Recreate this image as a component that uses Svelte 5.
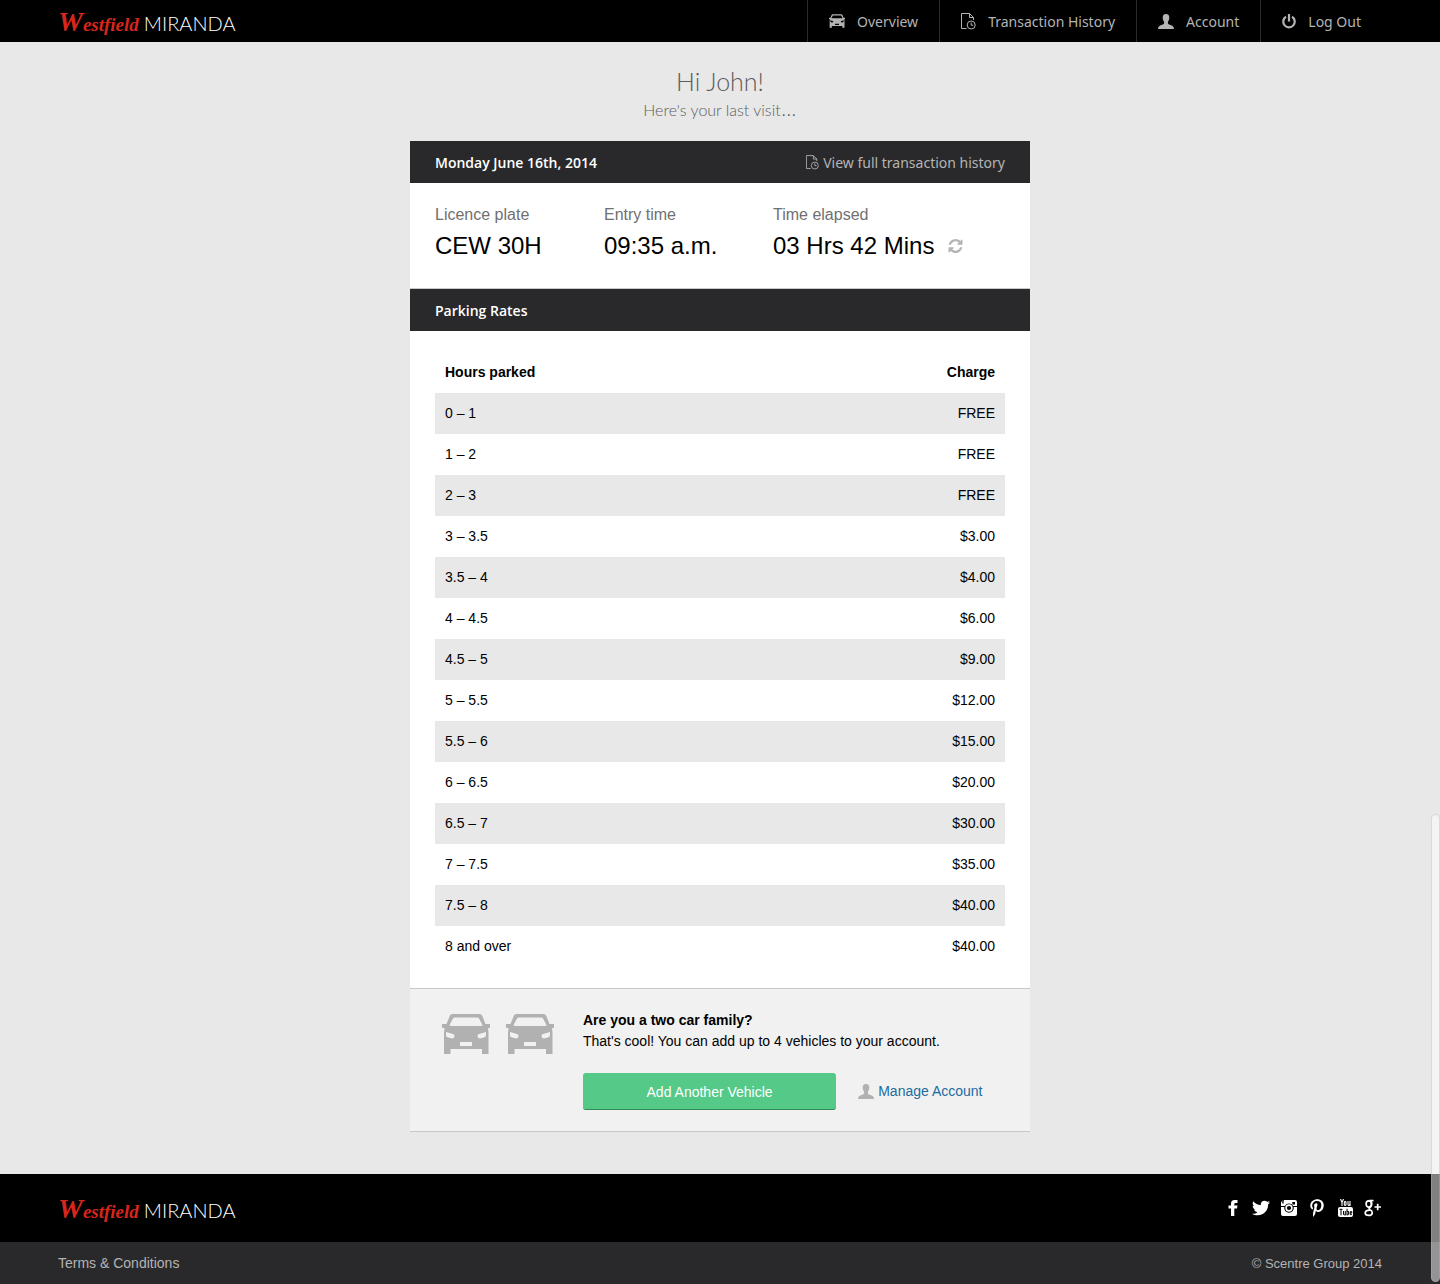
<script>
  const rates = [
    ['0 – 1', 'FREE'],
    ['1 – 2', 'FREE'],
    ['2 – 3', 'FREE'],
    ['3 – 3.5', '$3.00'],
    ['3.5 – 4', '$4.00'],
    ['4 – 4.5', '$6.00'],
    ['4.5 – 5', '$9.00'],
    ['5 – 5.5', '$12.00'],
    ['5.5 – 6', '$15.00'],
    ['6 – 6.5', '$20.00'],
    ['6.5 – 7', '$30.00'],
    ['7 – 7.5', '$35.00'],
    ['7.5 – 8', '$40.00'],
    ['8 and over', '$40.00']
  ];
  const visit = [
    ['Licence plate', 'CEW 30H'],
    ['Entry time', '09:35 a.m.'],
    ['Time elapsed', '03 Hrs 42 Mins']
  ];
</script>

{#snippet car()}
  <svg class="car" viewBox="0 0 48 40" aria-hidden="true">
    <path fill-rule="evenodd" d="M10.500 0H37.500Q39.500 0 40.300 2L43.500 10H48V14H46L46.500 19V40H40V35H8.500V40H2V19L2.500 14H0V10H4.500L7.700 2Q8.500 0 10.500 0ZM12.500 3.500Q11.500 3.500 11 4.500L7.500 11Q7.500 12 9 12H39Q40.500 12 40.500 11L37 4.500Q36.500 3.500 35.500 3.500ZM4 18L11 20Q12.500 20.500 12.500 22V22.500Q12 24.500 10 24.500L6 23.500Q4 23 4 21ZM44 18L37 20Q35.500 20.500 35.500 22V22.500Q36 24.500 38 24.500L42 23.500Q44 23 44 21ZM18 28H30V32H18Z" />
  </svg>
{/snippet}

{#snippet history()}
  <svg class="history" viewBox="0 0 15 17" aria-hidden="true">
    <g fill="none" stroke="currentColor" stroke-width="1">
      <path d="M5.500 15.500H.5V.5H8.500L12.500 4.500V7M8.500 .5V4.500H12.500" />
      <circle cx="10.200" cy="12" r="4" />
      <path d="M10.200 9.500V12.200H12.200" />
    </g>
  </svg>
{/snippet}

{#snippet person()}
  <svg class="person" viewBox="0 0 16 15" aria-hidden="true">
    <path d="M8 0C10.400 0 11.400 1.600 11.300 3.800C11.200 6 10.500 7 9.900 7.800V9.500C10.400 10.800 13 11 14.600 12Q16 12.800 16 15H0Q0 12.800 1.400 12C3 11 5.600 10.800 6.100 9.500V7.800C5.500 7 4.800 6 4.700 3.800C4.600 1.600 5.600 0 8 0Z" />
  </svg>
{/snippet}

{#snippet brand()}
  <a class="brand" href="#home">
    <span class="mark"><span class="cap">W</span>estfield</span>
    <span class="centre">MIRANDA</span>
  </a>
{/snippet}

<div class="page">
  <header class="top">
    {@render brand()}
    <nav>
      <a href="#overview">{@render car()}Overview</a>
      <a href="#history">{@render history()}Transaction History</a>
      <a href="#account">{@render person()}Account</a>
      <a href="#logout">
        <svg class="power" viewBox="0 0 14 15" aria-hidden="true">
          <path d="M4 2.800A5.700 5.700 0 1 0 10 2.800M7 0V7.500" fill="none" stroke="currentColor" stroke-width="2.200" />
        </svg>Log Out</a>
    </nav>
  </header>

  <main>
    <div class="greeting">
      <h1>Hi John!</h1>
      <p>Here's your last visit<span>…</span></p>
    </div>

    <div class="card">
      <div class="bar">
        <h2>Monday June 16th, 2014</h2>
        <a href="#history">{@render history()}View full transaction history</a>
      </div>
      <dl class="visit">
        {#each visit as [label, value], i}
          <div>
            <dt>{label}</dt>
            <dd>
              {value}
              {#if i === 2}
                <button class="refresh" aria-label="Refresh time elapsed">
                  <svg viewBox="0 0 1536 1536" aria-hidden="true"><path d="M1511 928q0 5-1 7-64 268-268 434.500t-478 166.500q-146 0-282.500-55t-243.500-157l-129 129q-19 19-45 19t-45-19-19-45v-448q0-26 19-45t45-19h448q26 0 45 19t19 45-19 45l-137 137q71 66 161 102t187 36q134 0 250-65t186-179q11-17 53-117 8-23 30-23h192q13 0 22.500 9.500t9.500 22.500zm25-800v448q0 26-19 45t-45 19h-448q-26 0-45-19t-19-45 19-45l138-138q-148-137-349-137-134 0-250 65t-186 179q-11 17-53 117-8 23-30 23h-199q-13 0-22.500-9.500t-9.500-22.500v-7q65-268 270-434.500t480-166.500q146 0 284 55.500t245 156.500l130-129q19-19 45-19t45 19 19 45z" /></svg>
                </button>
              {/if}
            </dd>
          </div>
        {/each}
      </dl>

      <div class="bar"><h2>Parking Rates</h2></div>
      <div class="rates">
        <table>
          <thead>
            <tr><th scope="col">Hours parked</th><th scope="col">Charge</th></tr>
          </thead>
          <tbody>
            {#each rates as [hours, charge]}
              <tr><td>{hours}</td><td>{charge}</td></tr>
            {/each}
          </tbody>
        </table>
      </div>

      <section class="promo">
        <div class="cars">{@render car()}{@render car()}</div>
        <div class="pitch">
          <h3>Are you a two car family?</h3>
          <p>That's cool! You can add up to 4 vehicles to your account.</p>
          <div class="actions">
            <button class="add">Add Another Vehicle</button>
            <a href="#account">{@render person()}Manage Account</a>
          </div>
        </div>
      </section>
    </div>
  </main>

  <footer>
    <div class="foot-main">
      {@render brand()}
      <div class="social">
        <a href="#facebook" aria-label="Facebook">
          <svg viewBox="0 0 18 18"><path d="M7 17V9.500H4.500V6.500H7V4.500Q7 1 10.500 1H13.500V4H11.500Q10.300 4 10.300 5.200V6.500H13.500L13 9.500H10.300V17Z" /></svg>
        </a>
        <a href="#twitter" aria-label="Twitter">
          <svg viewBox="0 0 24 24"><path d="M23.954 4.569c-.885.389-1.830.654-2.825.775 1.014-.611 1.794-1.574 2.163-2.723-.951.555-2.005.959-3.127 1.184-.896-.959-2.173-1.559-3.591-1.559-2.717 0-4.920 2.203-4.920 4.917 0 .39.045.765.127 1.124C7.691 8.094 4.066 6.130 1.640 3.161c-.427.722-.666 1.561-.666 2.475 0 1.710.87 3.213 2.188 4.096-.807-.026-1.566-.248-2.228-.616v.061c0 2.385 1.693 4.374 3.946 4.827-.413.111-.849.171-1.296.171-.314 0-.615-.03-.916-.086.631 1.953 2.445 3.377 4.604 3.417-1.680 1.319-3.809 2.105-6.102 2.105-.39 0-.779-.023-1.170-.067 2.189 1.394 4.768 2.209 7.557 2.209 9.054 0 13.999-7.496 13.999-13.986 0-.209 0-.42-.015-.63.961-.689 1.800-1.560 2.460-2.548l-.047-.02z" /></svg>
        </a>
        <a href="#instagram" aria-label="Instagram">
          <svg viewBox="0 0 18 18"><path fill-rule="evenodd" d="M4 1H15Q17 1 17 3V7H13.200A4.800 4.800 0 0 0 4.800 7H1V3.500L2 2V4.500H2.700V1.400H3.400V4.500H4ZM12.300 3V5.600H15V3ZM1 8H4.300A4.800 4.800 0 1 0 13.700 8H17V15Q17 17 15 17H3Q1 17 1 15Z" /><circle cx="9" cy="9" r="2.900" fill="none" stroke="currentColor" stroke-width="1.600" /></svg>
        </a>
        <a href="#pinterest" aria-label="Pinterest">
          <svg viewBox="0 0 384 512"><path d="M204 6.500C101.400 6.500 0 74.900 0 185.600 0 256 39.600 296 63.600 296c9.900 0 15.600-27.600 15.600-35.400 0-9.300-23.700-29.100-23.700-67.800 0-80.400 61.200-137.400 140.400-137.400 68.100 0 118.500 38.700 118.500 109.800 0 53.100-21.300 152.700-90.300 152.700-24.900 0-46.200-18-46.200-43.800 0-37.800 26.400-74.400 26.400-113.400 0-66.200-93.900-54.200-93.900 25.800 0 16.800 2.100 35.400 9.600 50.700-13.800 59.400-42 147.900-42 209.100 0 18.900 2.700 37.500 4.500 56.400 3.400 3.800 1.700 3.400 6.900 1.500 50.400-69 48.600-82.500 71.400-172.800 12.300 23.400 44.100 36 69.300 36 106.200 0 153.900-103.500 153.900-196.800C384 71.300 298.200 6.500 204 6.500z" /></svg>
        </a>
        <a href="#youtube" aria-label="YouTube">
          <svg viewBox="0 0 18 18">
            <rect x="2" y="8" width="15" height="10" rx="2" />
            <g fill="none" stroke="#fff" stroke-width="1.100"><path d="M4.500 0L6 3.500L7.500 0M6 3.500V7" /><rect x="8.300" y="2.600" width="1.700" height="3.800" rx=".8" /><path d="M12 2V5.800Q12.600 7 14 5.500M14 2V7" /></g>
            <g fill="none" stroke="#000" stroke-width="1"><path d="M3.500 10.300H6.500M5 10.300V16.300M7.500 12V15.500Q8.200 16.500 9.300 15.300M9.300 12V16.300M11 9.800V16.300M11 12.500Q12.600 11.500 12.600 13V15.300Q12.400 16.500 11 15.500M14.200 14H15.800V12.800Q15 11.800 14.200 12.800V15.500Q15 16.500 15.800 15.200" /></g>
          </svg>
        </a>
        <a href="#googleplus" aria-label="Google Plus">
          <svg viewBox="0 0 18 18"><g fill="none" stroke="#fff" stroke-width="1.700"><ellipse cx="4.800" cy="5" rx="2.700" ry="3.200" /><path d="M5 1.700H9.500M6.500 2Q8 3.500 7.400 6Q7 7.500 5.500 8.800Q4.600 9.800 6 10.700Q8.500 12 8.300 13.800Q8 16.400 4.800 16.400Q1.300 16.400 1.200 14Q1.300 11.300 5.800 11.200" /><path d="M10.500 8H17M13.700 4.800V11.300" /></g></svg>
        </a>
      </div>
    </div>
    <div class="foot-legal">
      <a href="#terms">Terms &amp; Conditions</a>
      <small>© Scentre Group 2014</small>
    </div>
  </footer>
  <div class="scroll-thumb" aria-hidden="true"></div>
</div>

<style>
  :global(body) {
    margin: 0;
    background: #e8e8e8;
  }
  .page {
    display: flex;
    flex-direction: column;
    min-height: 100vh;
    font: 14px/21px "Liberation Sans", Arial, sans-serif;
    color: #000;
  }
  a {
    color: inherit;
    text-decoration: none;
  }
  svg {
    display: block;
    flex: none;
    fill: currentColor;
  }
  h1, h2, h3, p, dl, dd {
    margin: 0;
  }
  button {
    border: 0;
    padding: 0;
    font: inherit;
    cursor: pointer;
  }
  .top, .foot-main, .foot-legal {
    display: flex;
    justify-content: space-between;
    align-items: center;
    padding: 0 58px;
  }
  .top {
    height: 42px;
    background: #000;
  }
  .brand {
    display: flex;
    align-items: baseline;
    gap: 5px;
    padding-top: 5px;
    color: #fff;
    line-height: 36px;
  }
  .mark {
    font-family: "Liberation Serif", "Times New Roman", serif;
    font-style: italic;
    font-weight: 700;
    font-size: 19px;
    color: #d9261c;
  }
  .cap {
    font-size: 28px;
    line-height: 1;
  }
  .centre {
    font-family: Lato, sans-serif;
    font-weight: 300;
    font-size: 20px;
  }
  nav {
    display: flex;
    align-self: stretch;
    font-family: "Noto Sans", sans-serif;
    color: #b4b4b4;
  }
  nav a {
    display: flex;
    align-items: center;
    gap: 12px;
    padding: 0 21px;
    border-left: 1px solid #2b2b2d;
  }
  nav .car {
    width: 16px;
    height: 14px;
  }
  .history {
    width: 15px;
    height: 17px;
  }
  .person {
    width: 16px;
    height: 15px;
  }
  .power {
    width: 14px;
    height: 15px;
  }
  main {
    flex: 1;
    padding: 23px 20px 42px;
  }
  .greeting {
    padding-bottom: 19px;
    text-align: center;
    font-family: Lato, sans-serif;
    color: #5c5c5c;
  }
  h1 {
    font-size: 25px;
    line-height: 32px;
    font-weight: 300;
  }
  .greeting p {
    font-size: 16px;
    line-height: 25px;
    font-weight: 300;
  }
  .greeting span {
    font-family: "Liberation Sans", Arial, sans-serif;
    line-height: 1;
  }
  .card {
    max-width: 620px;
    margin: 0 auto;
    background: #fff;
  }
  .bar {
    display: flex;
    justify-content: space-between;
    align-items: center;
    height: 42px;
    padding: 0 25px;
    background: #29292b;
    color: #fff;
    font-family: "Noto Sans", sans-serif;
  }
  h2 {
    font-family: "Open Sans", sans-serif;
    font-size: 14px;
    font-weight: 600;
  }
  .bar a {
    display: flex;
    align-items: center;
    gap: 4px;
    color: #b4b4b4;
  }
  .bar .history {
    width: 13px;
    height: 15px;
  }
  .visit {
    display: grid;
    grid-template-columns: 169px 169px 1fr;
    padding: 20px 25px 24px;
    border-bottom: 1px solid #c8c8c8;
  }
  dt {
    font-size: 16px;
    line-height: 24px;
    color: #707070;
  }
  dd {
    display: flex;
    align-items: center;
    gap: 14px;
    font-size: 24px;
    line-height: 37px;
  }
  .refresh {
    background: none;
    color: #b4b4b4;
  }
  .refresh svg {
    width: 15px;
    height: 14px;
  }
  .rates {
    padding: 21px 25px;
    border-bottom: 1px solid #c8c8c8;
  }
  table {
    width: 100%;
    border-collapse: collapse;
  }
  th, td {
    padding: 10px;
    text-align: left;
  }
  th:last-child, td:last-child {
    text-align: right;
  }
  tbody tr:nth-child(odd) {
    background: #e8e8e8;
  }
  .promo {
    display: flex;
    gap: 29px;
    padding: 21px 25px;
    background: #f1f1f1;
    border-bottom: 1px solid #c8c8c8;
  }
  .cars {
    display: flex;
    gap: 16px;
    padding: 4px 0 0 7px;
    color: #b1b1b1;
  }
  .cars .car {
    width: 48px;
    height: 40px;
  }
  .pitch {
    flex: 1;
  }
  h3 {
    font-size: 14px;
    line-height: 21px;
  }
  .actions {
    display: flex;
    align-items: center;
    gap: 22px;
    padding-top: 21px;
  }
  .add {
    width: 60%;
    height: 37px;
    padding-top: 2px;
    border-bottom: 1px solid #2d8a55;
    border-radius: 3px;
    background: #55c987;
    color: #fff;
  }
  .actions a {
    display: flex;
    align-items: center;
    gap: 4px;
    color: #206ca0;
  }
  .actions .person {
    color: #b1b1b1;
  }
  .foot-main {
    height: 68px;
    background: #000;
  }
  .social {
    display: flex;
    gap: 10px;
    color: #fff;
  }
  .social svg {
    width: 18px;
    height: 18px;
  }
  .foot-legal {
    height: 42px;
    background: #29292b;
    color: #b4b4b4;
  }
  small {
    font-size: 13px;
  }
  .scroll-thumb {
    position: fixed;
    right: 0;
    bottom: 2px;
    box-sizing: border-box;
    width: 9px;
    height: 468px;
    border: 1px solid rgba(180, 180, 180, 0.4);
    border-radius: 5px;
    background: rgba(255, 255, 255, 0.5);
  }
</style>
